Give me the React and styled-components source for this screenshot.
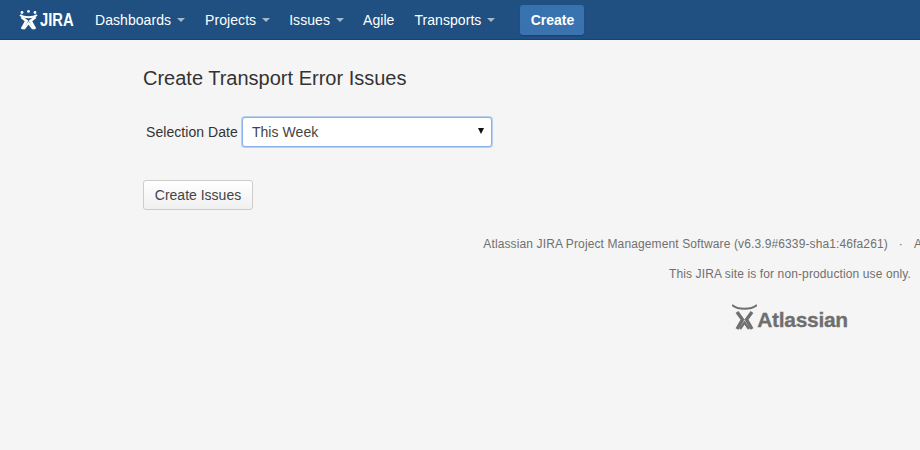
import styled, { createGlobalStyle } from "styled-components";

const GlobalStyle = createGlobalStyle`
  html, body {
    margin: 0;
    height: 100%;
    overflow: hidden;
    background-color: #f5f5f5;
  }
  body {
    font-family: "Liberation Sans", Arial, sans-serif;
    font-size: 14px;
    color: #333;
  }
`;

const NavBar = styled.header`
  display: flex;
  align-items: center;
  height: 39px;
  padding-left: 19px;
  background-color: #205081;
  border-bottom: 1px solid #2a3f55;
`;

const Brand = styled.a`
  display: flex;
  align-items: center;
  width: 76px;
  color: #fff;
`;

const BrandName = styled.span`
  display: inline-block;
  width: 34px;
  margin-left: 1px;
  padding-top: 2px;
  font-size: 18px;
  font-weight: 700;
  transform: scaleX(0.82);
  transform-origin: left center;
`;

const NavItem = styled.a`
  display: flex;
  align-items: center;
  margin-right: ${(props) => props.gap}px;
  color: #fff;
  font-size: 14px;
  letter-spacing: 0.06px;
`;

const Caret = styled.span`
  width: 0;
  height: 0;
  margin-left: 6px;
  border-top: 4px solid #a5b9cd;
  border-left: 4px solid transparent;
  border-right: 4px solid transparent;
`;

const CreateButton = styled.button`
  height: 30px;
  width: 64px;
  margin-left: 9px;
  padding: 0;
  border: 0;
  border-radius: 3px;
  background: linear-gradient(#3572b0, #3b73af);
  box-shadow: 0 1px 1px rgba(0, 0, 0, 0.2);
  color: #fff;
  font-family: inherit;
  font-size: 14px;
  font-weight: 700;
`;

const Main = styled.main`
  padding: 27px 0 0 143px;
`;

const Title = styled.h1`
  margin: 0;
  font-size: 20px;
  font-weight: 400;
  line-height: 22px;
`;

const FormRow = styled.div`
  display: flex;
  align-items: center;
  margin-top: 28px;
  padding-left: 3px;
`;

const Label = styled.label`
  margin-right: 4px;
  font-size: 14px;
  letter-spacing: 0.06px;
`;

const SelectBox = styled.div`
  position: relative;
  display: flex;
  align-items: center;
  box-sizing: border-box;
  width: 250px;
  height: 30px;
  padding-left: 9px;
  background-color: #fff;
  border: 1px solid #8ab0ea;
  border-radius: 3px;
  box-shadow: 0 0 0 1px rgba(138, 176, 234, 0.55);
  font-size: 14px;
  letter-spacing: 0.06px;
  color: #444;
`;

const SelectArrow = styled.span`
  position: absolute;
  right: 7px;
  top: 10px;
  width: 0;
  height: 0;
  border-top: 6px solid #111;
  border-left: 3px solid transparent;
  border-right: 3px solid transparent;
`;

const IssuesButton = styled.button`
  display: block;
  width: 110px;
  height: 30px;
  margin-top: 33px;
  padding: 0;
  background: linear-gradient(#fff, #f0f0f0);
  border: 1px solid #ccc;
  border-radius: 3px;
  color: #444;
  font-family: inherit;
  font-size: 14px;
`;

const Footer = styled.footer`
  width: 1294px;
  margin: 26px 0 0 143px;
  text-align: center;
  color: #707070;
  font-size: 12px;
  letter-spacing: 0.12px;
`;

const FooterLine = styled.p`
  margin: 0 0 ${(props) => props.after}px;
  line-height: 16px;
  white-space: nowrap;
`;

const Dot = styled.span`
  margin: 0 11px;
`;

const AtlassianLogo = styled.div`
  display: flex;
  align-items: flex-end;
  justify-content: center;
  color: #6f6f6f;
`;

const AtlassianName = styled.span`
  font-size: 21px;
  font-weight: 700;
  line-height: 21px;
  letter-spacing: -0.3px;
  -webkit-text-stroke: 0.3px #6f6f6f;
`;

const JiraMark = () => (
  <svg width="20" height="20" viewBox="0 0 20 20" fill="none" stroke="#fff">
    <circle cx="3" cy="2.5" r="1.4" fill="#fff" stroke="none" />
    <circle cx="9.5" cy="1.4" r="1.4" fill="#fff" stroke="none" />
    <circle cx="16" cy="2.5" r="1.4" fill="#fff" stroke="none" />
    <path d="M1 5 C5 8 14 8 18 5" strokeWidth="2" />
    <path d="M3 19 L7.5 11 L2.5 7 M16 19 L11.5 11 L16.5 7" strokeWidth="2.8" />
    <path d="M5 19 L9.5 13 L14 19" strokeWidth="2" />
  </svg>
);

const AtlassianMark = () => (
  <svg width="25" height="26" viewBox="0 0 25 26" fill="none" stroke="#6f6f6f">
    <path d="M0 1 C6 6 19 6 25 1" strokeWidth="1.8" />
    <path d="M5 8 L10.5 15.5 L5 25 M20 8 L14.5 15.5 L20 25" strokeWidth="3.4" />
    <path d="M8 25 L12.5 18.5 L17 25" strokeWidth="2.4" />
  </svg>
);

const App = () => {
  return (
    <>
      <GlobalStyle />
      <NavBar>
        <Brand>
          <JiraMark />
          <BrandName>JIRA</BrandName>
        </Brand>
        <NavItem gap={20}>Dashboards<Caret /></NavItem>
        <NavItem gap={19}>Projects<Caret /></NavItem>
        <NavItem gap={19}>Issues<Caret /></NavItem>
        <NavItem gap={20}>Agile</NavItem>
        <NavItem gap={16}>Transports<Caret /></NavItem>
        <CreateButton>Create</CreateButton>
      </NavBar>
      <Main>
        <Title>Create Transport Error Issues</Title>
        <FormRow>
          <Label>Selection Date</Label>
          <SelectBox>
            This Week
            <SelectArrow />
          </SelectBox>
        </FormRow>
        <IssuesButton>Create Issues</IssuesButton>
      </Main>
      <Footer>
        <FooterLine after={14}>
          Atlassian JIRA Project Management Software (v6.3.9#6339-sha1:46fa261)
          <Dot>·</Dot>
          About JIRA
          <Dot>·</Dot>
          Report a problem
        </FooterLine>
        <FooterLine after={22}>This JIRA site is for non-production use only.</FooterLine>
        <AtlassianLogo>
          <AtlassianMark />
          <AtlassianName>Atlassian</AtlassianName>
        </AtlassianLogo>
      </Footer>
    </>
  );
};

export default App;
